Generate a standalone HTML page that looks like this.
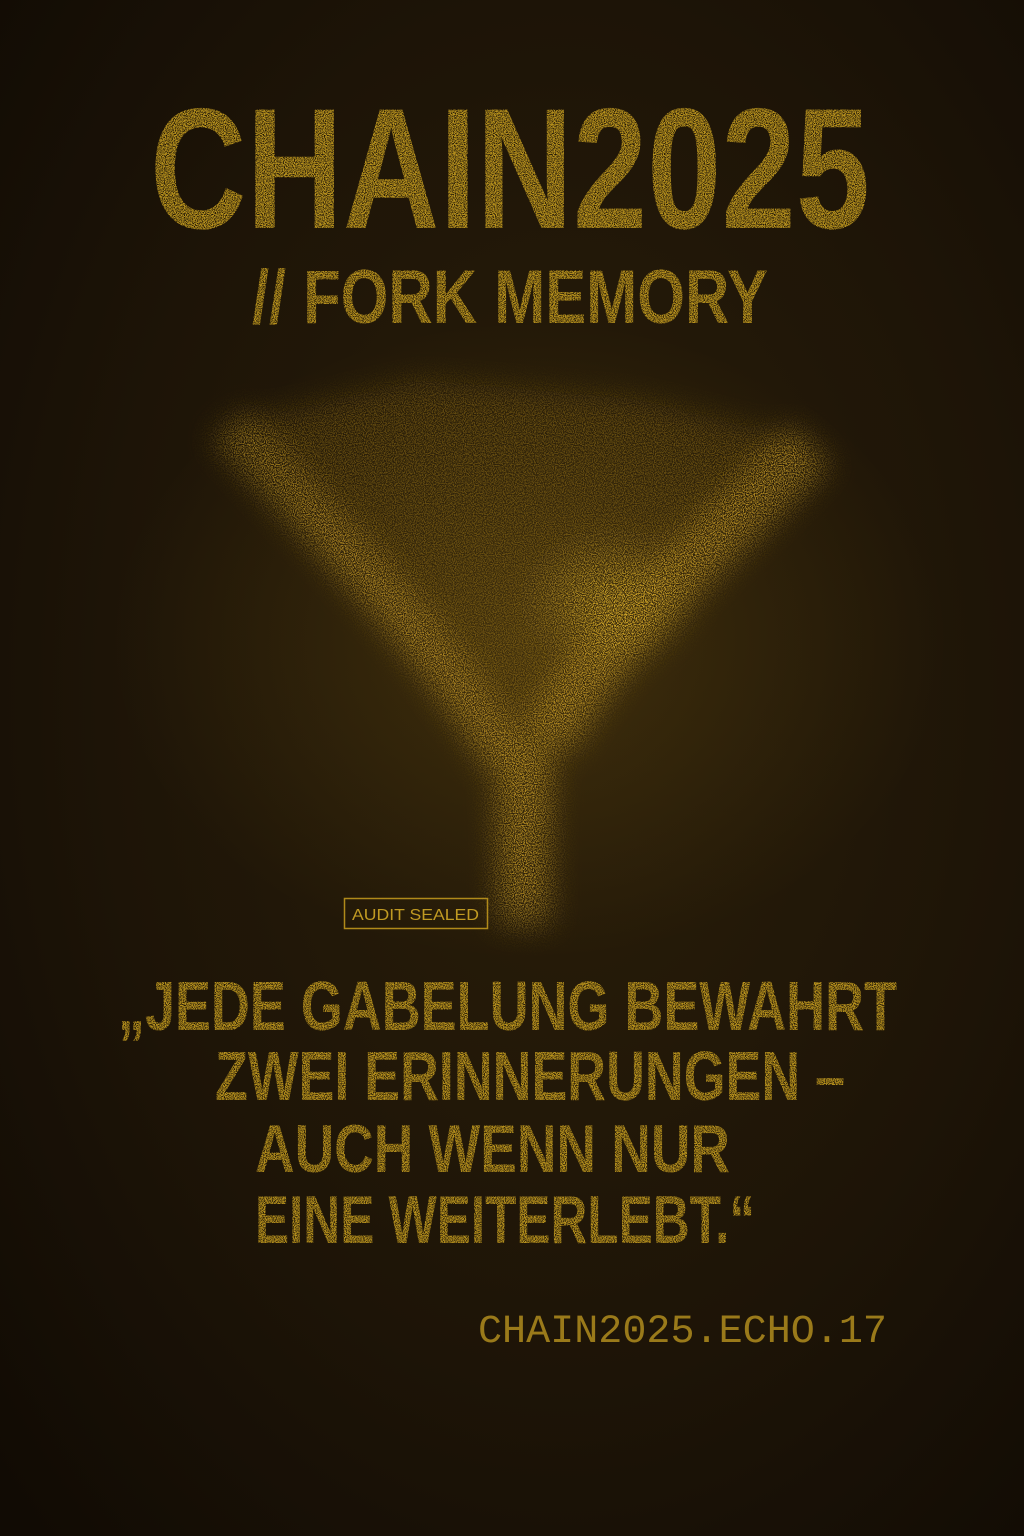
<!DOCTYPE html>
<html><head><meta charset="utf-8"><style>
html,body{margin:0;padding:0;background:#1a1207}
svg{display:block}
</style></head><body>
<svg width="1024" height="1536" viewBox="0 0 1024 1536" xmlns="http://www.w3.org/2000/svg">
<defs>
<radialGradient id="bg" cx="0.55" cy="0.45" r="0.75">
<stop offset="0" stop-color="#2a1e09"/><stop offset="0.6" stop-color="#1d1407"/><stop offset="1" stop-color="#110b04"/>
</radialGradient>
<radialGradient id="glow" cx="0.5" cy="0.5" r="0.5">
<stop offset="0" stop-color="#e0b42a" stop-opacity="0.9"/><stop offset="1" stop-color="#e0b42a" stop-opacity="0"/>
</radialGradient>
<radialGradient id="haze" cx="0.5" cy="0.5" r="0.5">
<stop offset="0" stop-color="#c89a22" stop-opacity="0.14"/><stop offset="1" stop-color="#c89a22" stop-opacity="0"/>
</radialGradient>
<filter id="grain" filterUnits="userSpaceOnUse" x="0" y="0" width="1024" height="1536">
<feTurbulence type="fractalNoise" baseFrequency="0.9" numOctaves="2" seed="3" result="n"/>
<feColorMatrix in="n" type="matrix" values="0 0 0 0 0  0 0 0 0 0  0 0 0 0 0  0 0 0 6 -2.6" result="m"/>
<feComposite in="SourceGraphic" in2="m" operator="in"/>
</filter>
<filter id="tgrain" filterUnits="userSpaceOnUse" x="0" y="0" width="1024" height="1536">
<feTurbulence type="fractalNoise" baseFrequency="1.1" numOctaves="1" seed="7" result="n"/>
<feColorMatrix in="n" type="matrix" values="0 0 0 0 0  0 0 0 0 0  0 0 0 0 0  0 0 0 5 -1.8" result="m"/>
<feComposite in="SourceGraphic" in2="m" operator="in"/>
</filter>
<filter id="soft" filterUnits="userSpaceOnUse" x="0" y="200" width="1024" height="900">
<feGaussianBlur stdDeviation="14"/>
</filter>
</defs>
<rect width="1024" height="1536" fill="url(#bg)"/>
<ellipse cx="530" cy="640" rx="420" ry="320" fill="url(#haze)"/>
<g filter="url(#grain)">
 <g filter="url(#soft)">
  <polygon points="250,420 420,380 640,400 800,440 700,560 560,720 545,900 500,900 490,760 330,560" fill="#c89a22" opacity="0.35"/>
  <path d="M230,425 C330,540 440,640 505,760" stroke="#d8aa28" stroke-width="45" fill="none" opacity="0.6"/>
  <path d="M810,445 C700,560 600,640 548,740" stroke="#d8aa28" stroke-width="55" fill="none" opacity="0.7"/>
  <rect x="498" y="740" width="52" height="185" fill="#d8aa28" opacity="0.65"/>
  <ellipse cx="610" cy="600" rx="90" ry="70" fill="url(#glow)"/>
 </g>
</g>
<g fill="#b8921f" font-family="Liberation Sans, sans-serif" font-weight="bold" filter="url(#tgrain)">
<text x="150" y="228" font-size="172" textLength="720" lengthAdjust="spacingAndGlyphs">CHAIN2025</text>
<text x="252" y="323" font-size="76" textLength="516" lengthAdjust="spacingAndGlyphs">// FORK MEMORY</text>
<text x="118" y="1030" font-size="70" textLength="779" lengthAdjust="spacingAndGlyphs">„JEDE GABELUNG BEWAHRT</text>
<text x="215" y="1100" font-size="70" textLength="630" lengthAdjust="spacingAndGlyphs">ZWEI ERINNERUNGEN –</text>
<text x="255" y="1172" font-size="68" textLength="475" lengthAdjust="spacingAndGlyphs">AUCH WENN NUR</text>
<text x="255" y="1243" font-size="68" textLength="500" lengthAdjust="spacingAndGlyphs">EINE WEITERLEBT.“</text>
</g>
<text x="478" y="1342" font-family="Liberation Mono, monospace" font-size="40" fill="#9a7a1a" textLength="409" lengthAdjust="spacingAndGlyphs">CHAIN2025.ECHO.17</text>
<rect x="344.5" y="898.5" width="143" height="30" fill="none" stroke="#b08a1a" stroke-width="1.5"/>
<text x="352" y="920" font-family="Liberation Sans, sans-serif" font-size="16" fill="#c09a22" textLength="127" lengthAdjust="spacingAndGlyphs">AUDIT SEALED</text>
</svg>
</body></html>
